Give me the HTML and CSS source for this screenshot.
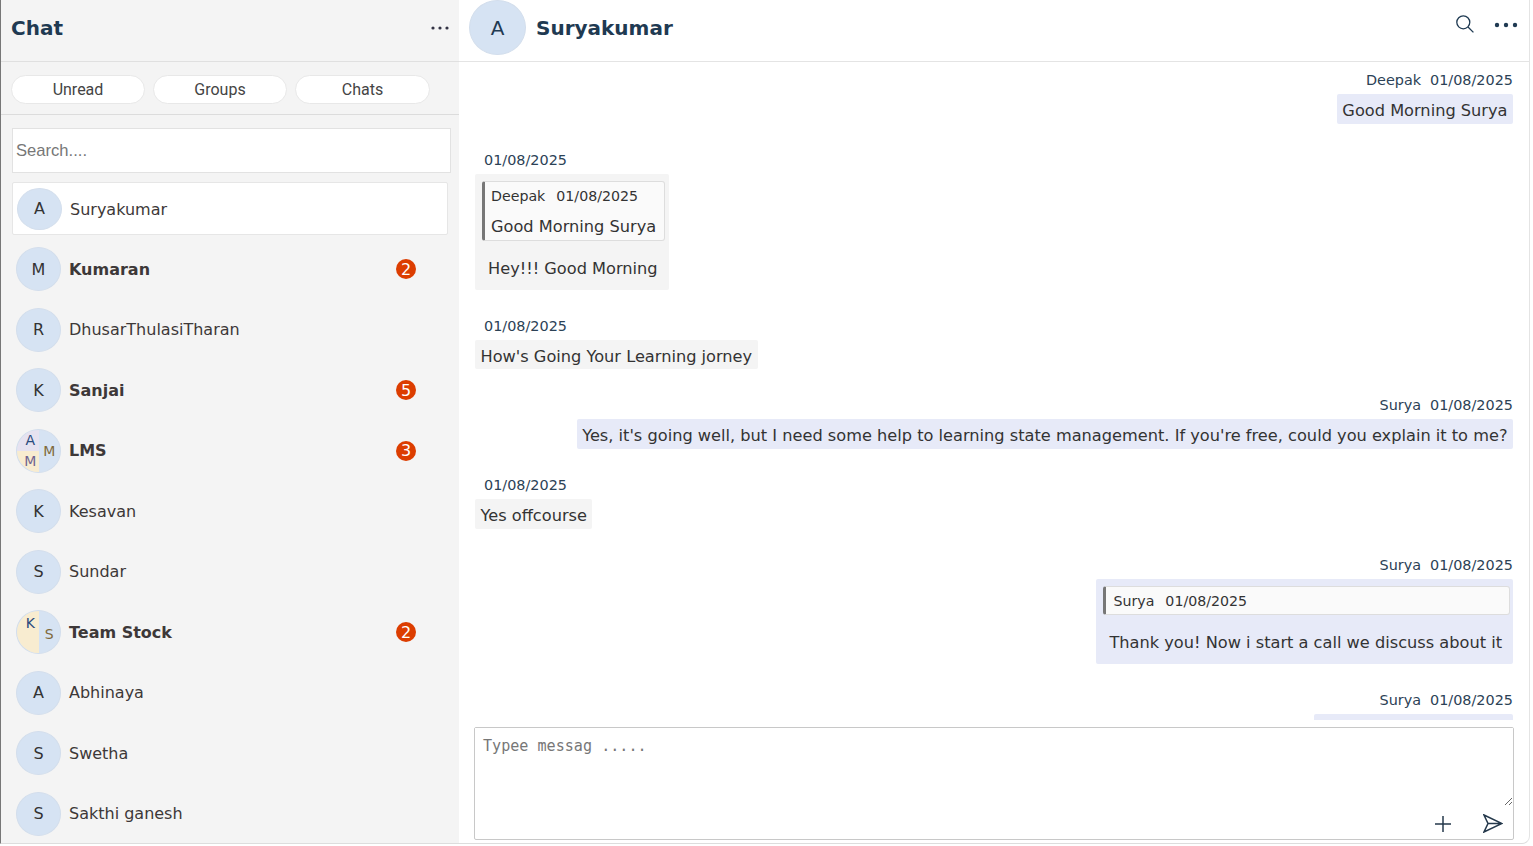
FILE: index.html
```html
<!DOCTYPE html>
<html lang="en">
<head>
    <meta charset="UTF-8">
    <meta name="viewport" content="width=device-width, initial-scale=1.0">
    <title>Chat</title>
    <link rel="stylesheet" href="styles.css">
</head>
<body>

    <div class="shell">
        <aside class="sidebar">
            <div class="side-head">
                <h1>Chat</h1>
                <svg class="side-dots" viewBox="0 0 18 4" width="18" height="4"><circle cx="2" cy="2" r="1.6"/><circle cx="9" cy="2" r="1.6"/><circle cx="16" cy="2" r="1.6"/></svg>
            </div>
            <div class="tabs">
                <button class="tab">Unread</button>
                <button class="tab">Groups</button>
                <button class="tab">Chats</button>
            </div>
            <input class="search" type="text" placeholder="Search....">
            <ul class="contacts">
                <li class="contact active"><span class="avatar">A</span><span class="name">Suryakumar</span></li>
                <li class="contact unread"><span class="avatar">M</span><span class="name">Kumaran</span><span class="badge">2</span></li>
                <li class="contact"><span class="avatar">R</span><span class="name">DhusarThulasiTharan</span></li>
                <li class="contact unread"><span class="avatar">K</span><span class="name">Sanjai</span><span class="badge">5</span></li>
                <li class="contact unread">
                    <span class="avatar group">
                        <span class="part-left">
                            <span class="tile lilac">A</span>
                            <span class="tile cream purple">M</span>
                        </span>
                        <span class="tile brown">M</span>
                    </span>
                    <span class="name">LMS</span><span class="badge">3</span>
                </li>
                <li class="contact"><span class="avatar">K</span><span class="name">Kesavan</span></li>
                <li class="contact"><span class="avatar">S</span><span class="name">Sundar</span></li>
                <li class="contact unread">
                    <span class="avatar group">
                        <span class="tile cream top">K</span>
                        <span class="tile brown low">S</span>
                    </span>
                    <span class="name">Team Stock</span><span class="badge">2</span>
                </li>
                <li class="contact"><span class="avatar">A</span><span class="name">Abhinaya</span></li>
                <li class="contact"><span class="avatar">S</span><span class="name">Swetha</span></li>
                <li class="contact"><span class="avatar">S</span><span class="name">Sakthi ganesh</span></li>
            </ul>
        </aside>

        <main class="chat">
            <header class="chat-head">
                <span class="avatar big">A</span>
                <h2>Suryakumar</h2>
                <svg class="head-search" viewBox="0 0 18 18" width="18" height="18" fill="none"><circle cx="7.3" cy="7.3" r="6.5"/><path d="M12 12l5.4 5.4"/></svg>
                <svg class="head-dots" viewBox="0 0 24 6" width="24" height="6"><circle cx="3" cy="3" r="2.2"/><circle cx="12" cy="3" r="2.2"/><circle cx="21" cy="3" r="2.2"/></svg>
            </header>

            <section class="messages">
                <div class="msg mine">
                    <div class="meta"><span>Deepak</span><span>01/08/2025</span></div>
                    <div class="bubble">Good Morning Surya</div>
                </div>
                <div class="msg">
                    <div class="meta"><span>01/08/2025</span></div>
                    <div class="bubble has-quote">
                        <div class="quote">
                            <div class="quote-meta"><span>Deepak</span><span>01/08/2025</span></div>
                            <div class="quote-text">Good Morning Surya</div>
                        </div>
                        <p>Hey!!! Good Morning</p>
                    </div>
                </div>
                <div class="msg">
                    <div class="meta"><span>01/08/2025</span></div>
                    <div class="bubble">How's Going Your Learning jorney</div>
                </div>
                <div class="msg mine">
                    <div class="meta"><span>Surya</span><span>01/08/2025</span></div>
                    <div class="bubble">Yes, it's going well, but I need some help to learning state management. If you're free, could you explain it to me?</div>
                </div>
                <div class="msg">
                    <div class="meta"><span>01/08/2025</span></div>
                    <div class="bubble">Yes offcourse</div>
                </div>
                <div class="msg mine">
                    <div class="meta"><span>Surya</span><span>01/08/2025</span></div>
                    <div class="bubble has-quote">
                        <div class="quote">
                            <div class="quote-meta"><span>Surya</span><span>01/08/2025</span></div>
                        </div>
                        <p>Thank you! Now i start a call we discuss about it</p>
                    </div>
                </div>
                <div class="msg mine">
                    <div class="meta"><span>Surya</span><span>01/08/2025</span></div>
                    <div class="bubble last"></div>
                </div>
            </section>

            <div class="composer">
                <textarea placeholder="Typee messag ....."></textarea>
                <div class="composer-actions">
                    <svg viewBox="0 0 18 18" width="18" height="18" fill="none"><path d="M9 1v16M1 9h16"/></svg>
                    <svg viewBox="0 0 20 19" width="20" height="19" fill="none"><path d="M1 1l18 8.500L1 18l4-8.500zM5 9.500h14"/></svg>
                </div>
            </div>
        </main>
    </div>

</body>
</html>
```

FILE: styles.css
```css
* {
    box-sizing: border-box;
}
body {
    font-family: "DejaVu Sans", sans-serif;
    background-color: white;
    margin: 0;
    color: #333;
}
.shell {
    display: flex;
    width: 1530px;
    height: 844px;
    overflow: hidden;
    border-left: 1px solid #777;
    border-right: 1px solid #e4e4e4;
    border-bottom: 1px solid #ddd;
    border-bottom-right-radius: 8px;
}

/* left column */
.sidebar {
    width: 458px;
    flex-shrink: 0;
    background-color: #f4f4f4;
}
.side-head {
    height: 62px;
    display: flex;
    align-items: center;
    justify-content: space-between;
    padding: 0 10px 5px 10px;
    border-bottom: 1px solid #e0e0e0;
}
.side-head h1 {
    margin: 0;
    font-size: 20px;
    font-weight: 700;
    color: #1f3a52;
}
.side-dots {
    fill: #334;
}
.tabs {
    height: 53px;
    display: flex;
    gap: 8px;
    padding: 13px 0 0 10px;
    border-bottom: 1px solid #dcdcdc;
}
.tab {
    width: 134px;
    height: 29px;
    padding: 0;
    font-family: Roboto, sans-serif;
    font-size: 16px;
    color: #444;
    background-color: white;
    border: 1px solid #e8e8e8;
    border-radius: 15px;
}
.tab:last-child {
    width: 135px;
}
.search {
    display: block;
    width: 439px;
    height: 45px;
    margin: 13px 0 9px 11px;
    padding: 0 3px;
    font-family: "Liberation Sans", sans-serif;
    font-size: 16.600px;
    background-color: white;
    border: 1px solid #e2e2e2;
    outline: none;
}
.search::placeholder {
    color: #777;
}
.contacts {
    list-style: none;
    margin: 0;
    padding: 0;
}
.contact {
    display: flex;
    align-items: center;
    height: 60.500px;
    padding-left: 15px;
    font-size: 16px;
    color: #3d3838;
}
.contact.active {
    width: 436px;
    height: 53px;
    margin: 0 0 4px 11px;
    padding-left: 4px;
    background-color: white;
    border: 1px solid #e6e6e6;
    border-radius: 2px;
}
.contact.active .name {
    padding-top: 1px;
}
.contact.unread .name {
    font-weight: 700;
}
.name {
    margin-left: 8px;
    flex: 1;
}
.avatar {
    width: 45px;
    height: 44px;
    flex-shrink: 0;
    display: flex;
    align-items: center;
    justify-content: center;
    overflow: hidden;
    font-size: 16px;
    color: #333;
    background-color: #d6e3f3;
    border: 1px solid #d3deec;
    border-radius: 50%;
}
.active .avatar {
    height: 42px;
}
.avatar.big {
    width: 57px;
    height: 55px;
    font-size: 20px;
    color: #1f3a52;
}
.avatar.group {
    align-items: stretch;
    font-size: 14px;
}
.part-left {
    display: flex;
    flex-direction: column;
    width: 50%;
}
.tile {
    flex: 1;
    display: flex;
    align-items: center;
    justify-content: center;
    width: 50%;
}
.part-left .tile {
    width: 100%;
    padding-left: 5px;
}
.lilac {
    background-color: #e6e2f0;
    color: #2a4a7c;
}
.cream {
    background-color: #f8ecd0;
}
.purple {
    color: #6f6390;
}
.brown {
    color: #806a3c;
}
.top {
    flex: 0 0 50%;
    color: #2a4a7c;
    padding: 0 0 18px 5px;
}
.low {
    flex: 0 0 50%;
    padding-top: 3px;
}
.badge {
    width: 20px;
    height: 20px;
    margin-right: 43px;
    display: flex;
    align-items: center;
    justify-content: center;
    font-size: 16px;
    color: white;
    background-color: #dc3d00;
    border-radius: 50%;
}

/* right column */
.chat {
    flex: 1;
    min-width: 0;
    display: flex;
    flex-direction: column;
}
.chat-head {
    height: 62px;
    flex-shrink: 0;
    display: flex;
    align-items: flex-start;
    padding-left: 10px;
    border-bottom: 1px solid #e4e4e4;
}
.chat-head h2 {
    flex: 1;
    margin: 16px 0 0 10px;
    font-size: 20px;
    font-weight: 700;
    color: #1f3a52;
}
.head-search {
    margin: 15px 20px 0 0;
    stroke: #1f3a52;
    stroke-width: 1.300;
}
.head-dots {
    margin: 22px 11px 0 0;
    fill: #1f3a52;
}
.messages {
    height: 658px;
    flex-shrink: 0;
    overflow: hidden;
    padding: 8px 16px 0 16px;
}
.msg {
    display: flex;
    flex-direction: column;
    align-items: flex-start;
    margin-bottom: 26px;
}
.msg.mine {
    align-items: flex-end;
}
.meta {
    display: flex;
    gap: 9px;
    height: 20px;
    line-height: 20px;
    margin-bottom: 4px;
    padding-left: 9px;
    font-size: 14.400px;
    color: #2c4256;
}
.bubble {
    padding: 0 5.500px;
    height: 29.700px;
    line-height: 33px;
    font-size: 16.200px;
    background-color: #f4f4f4;
    border-radius: 2px;
}
.mine .bubble {
    background-color: #e7eaf8;
}
.bubble.has-quote {
    height: auto;
    padding: 7px 4px 0 7px;
}
.bubble.last {
    width: 199px;
    height: 40px;
}
.bubble p {
    margin: 0;
    padding: 13px 7px 6px 6px;
    line-height: 30px;
}
.quote {
    padding: 3px 6px 0 6px;
    background-color: #fafafa;
    border: 1px solid #ddd;
    border-left: 3px solid #777;
    border-radius: 3px;
    line-height: 1;
}
.msg.mine .quote {
    height: 29px;
    padding-left: 7px;
    margin-right: -1px;
}
.quote-meta {
    display: flex;
    gap: 11px;
    height: 22px;
    line-height: 22px;
    font-size: 14.200px;
}
.quote-text {
    padding-top: 7px;
    line-height: 26px;
    font-size: 16.200px;
}
.composer {
    display: flex;
    flex-direction: column;
    width: 1040px;
    height: 113px;
    margin: 7px 0 0 15px;
    background-color: white;
    border: 1px solid #c8c8c8;
    border-radius: 2px;
}
.composer textarea {
    height: 78px;
    flex-shrink: 0;
    padding: 9px 8px 8px 8px;
    font-family: "DejaVu Sans Mono", monospace;
    font-size: 15.100px;
    border: none;
    outline: none;
}
.composer textarea::placeholder {
    color: #777;
}
.composer-actions {
    display: flex;
    justify-content: flex-end;
    align-items: center;
    gap: 31px;
    padding: 8px 10px 0 0;
}
.composer-actions svg {
    stroke: #24384b;
    stroke-width: 1.500;
}
```
